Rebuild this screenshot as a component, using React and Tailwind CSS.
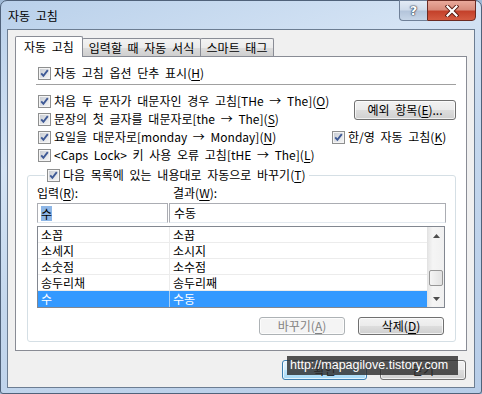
import React from "react";

function Check() {
  return (
    <svg width="13" height="13" viewBox="0 0 13 13" className="shrink-0">
      <defs>
        <linearGradient id="cbg" x1="0" y1="0" x2="1" y2="1">
          <stop offset="0" stopColor="#c9cdd4" />
          <stop offset="1" stopColor="#f4f4f4" />
        </linearGradient>
      </defs>
      <rect x="0.5" y="0.5" width="12" height="12" fill="#f4f4f4" stroke="#8e8f8f" />
      <rect x="2" y="2" width="9" height="9" fill="url(#cbg)" />
      <path d="M3.2 6.3 L5.4 8.8 L9.8 3.2" fill="none" stroke="#3f5a96" strokeWidth="1.9" />
    </svg>
  );
}

function CheckRow({ children, className = "" }) {
  return (
    <div className={`flex h-[18px] items-center ${className}`}>
      <Check />
      <span className="ml-[3px] whitespace-nowrap leading-[18px]">{children}</span>
    </div>
  );
}

function U({ children }) {
  return <span className="underline underline-offset-[2px]">{children}</span>;
}

function Btn({ children, className = "", disabled = false, isDefault = false }) {
  let look =
    "border-[#707070] bg-[linear-gradient(180deg,#f2f2f2_0%,#ebebeb_48%,#dddddd_52%,#cfcfcf_100%)] text-black";
  if (disabled) look = "border-[#adb2b5] bg-[#f4f4f4] text-[#838383]";
  if (isDefault)
    look =
      "border-[#3c7fb1] bg-[linear-gradient(180deg,#eaf6fd_0%,#d9f0fc_48%,#bee6fd_52%,#a7d9f5_100%)] text-black";
  return (
    <div
      className={`flex items-center justify-center rounded-[3px] border shadow-[inset_0_0_0_1px_rgba(255,255,255,0.7)] whitespace-nowrap ${look} ${className}`}
    >
      {children}
    </div>
  );
}

const rows = [
  ["소꼽", "소꿉"],
  ["소세지", "소시지"],
  ["소숫점", "소수점"],
  ["송두리채", "송두리째"],
];

export default function App() {
  return (
    <div className="w-[482px] h-[394px] overflow-hidden bg-[#9fb9d6] font-['Noto_Sans_CJK_KR',sans-serif] text-[12px] text-black [word-spacing:3px]">
      <div className="relative w-[482px] h-[394px] rounded-t-[7px] rounded-b-[3px] border border-[#50627a] bg-[linear-gradient(160deg,#b9d0ea_0%,#d4e3f4_30%,#c4d7ed_55%,#b7cde8_100%)] flex flex-col">
        {/* title bar */}
        <div className="h-[28px] shrink-0 flex items-start justify-between">
          <div className="pl-[7px] pt-[6px] leading-[18px]">자동 고침</div>
          <div className="flex mr-[5px] -mt-px">
            <div className="w-[28px] h-[21px] rounded-bl-[4px] border border-[#6f8098] border-r-0 bg-[linear-gradient(180deg,#e3ebf5_0%,#cfdbea_48%,#b3c4da_52%,#c7d6e8_100%)] flex items-center justify-center">
              <span className="font-['DejaVu_Sans',sans-serif] font-bold text-[13px] leading-none text-white [text-shadow:0_0_1px_#2b3a4f,0_0_1px_#2b3a4f,0_0_2px_#2b3a4f]">?</span>
            </div>
            <div className="w-[49px] h-[21px] rounded-br-[4px] border border-[#6b2a22] bg-[linear-gradient(180deg,#e9a99b_0%,#d88c7c_45%,#c4412b_55%,#d45b41_100%)] flex items-center justify-center">
              <svg width="14" height="12" viewBox="0 0 14 12">
                <path d="M2.5 1.5 L11.5 10.5 M11.5 1.5 L2.5 10.5" stroke="#5a1b12" strokeWidth="4" strokeLinecap="square" />
                <path d="M2.5 1.5 L11.5 10.5 M11.5 1.5 L2.5 10.5" stroke="#ffffff" strokeWidth="2.2" strokeLinecap="square" />
              </svg>
            </div>
          </div>
        </div>

        {/* client area */}
        <div className="mx-[6px] h-[359px] shrink-0 border border-[#6c7d92] bg-[#f0f0f0] flex flex-col pl-[7px] pr-[7px] pt-[6px]">
          {/* tabs */}
          <div className="flex h-[20px] items-end relative z-10">
            <div className="h-[21px] w-[68px] -mb-px bg-white border border-b-0 border-[#898c95] rounded-t-[2px] flex items-center justify-center pb-[1px]">
              자동 고침
            </div>
            <div className="h-[18px] w-[119px] -ml-px border border-b-0 border-[#898c95] rounded-t-[2px] bg-[linear-gradient(180deg,#f3f3f3_0%,#ebebeb_50%,#dddddd_51%,#cfcfcf_100%)] flex items-center justify-center">
              입력할 때 자동 서식
            </div>
            <div className="h-[18px] w-[74px] -ml-px border border-b-0 border-[#898c95] rounded-t-[2px] bg-[linear-gradient(180deg,#f3f3f3_0%,#ebebeb_50%,#dddddd_51%,#cfcfcf_100%)] flex items-center justify-center">
              스마트 태그
            </div>
          </div>

          {/* panel */}
          <div className="h-[295px] border border-[#898c95] bg-white flex flex-col pt-[7px]">
            <CheckRow className="ml-[22px]">
              자동 고침 옵션 단추 표시(<U>H</U>)
            </CheckRow>
            <div className="mt-[2px] ml-[20px] mr-[10px] h-[2px] border-t border-[#a0a0a0] border-b border-b-white" />
            <div className="mt-[6px] ml-[22px] flex">
              <div className="w-[294px] flex flex-col">
                <CheckRow>
                  처음 두 문자가 대문자인 경우 고침[THe → The](<U>O</U>)
                </CheckRow>
                <CheckRow>
                  문장의 첫 글자를 대문자로[the → The](<U>S</U>)
                </CheckRow>
                <CheckRow>
                  요일을 대문자로[monday → Monday](<U>N</U>)
                </CheckRow>
                <CheckRow>
                  &lt;Caps Lock&gt; 키 사용 오류 고침[tHE → The](<U>L</U>)
                </CheckRow>
              </div>
              <div className="flex flex-col">
                <Btn className="ml-[22px] mt-[8px] w-[102px] h-[20px]">
                  예외 항목(<U>E</U>)...
                </Btn>
                <CheckRow className="mt-[8px]">
                  한/영 자동 고침(<U>K</U>)
                </CheckRow>
              </div>
            </div>

            <fieldset className="mt-[2px] ml-[11px] mr-[10px] border border-[#d5dfe5] rounded-[3px] pl-[9px] pr-[9px] pb-[6px]">
              <legend className="ml-[8px] pl-[2px] pr-[4px]">
                <CheckRow>
                  다음 목록에 있는 내용대로 자동으로 바꾸기(<U>T</U>)
                </CheckRow>
              </legend>
              <div className="flex h-[18px] items-center">
                <div className="w-[136px]">
                  입력(<U>R</U>):
                </div>
                <div>
                  결과(<U>W</U>):
                </div>
              </div>
              <div className="mt-[1px] flex gap-[1px]">
                <div className="w-[131px] h-[20px] border border-[#abadb3] border-b-[#e3e9ef] bg-white flex items-center pl-[3px]">
                  <span className="bg-[#8db6e6] leading-[15px]">수</span>
                </div>
                <div className="w-[277px] h-[20px] border border-[#abadb3] border-b-[#e3e9ef] bg-white flex items-center pl-[4px]">
                  수동
                </div>
              </div>
              <div className="mt-[3px] w-[408px] h-[82px] border border-[#828790] bg-white flex">
                <div className="flex-1 flex flex-col">
                  {rows.map(([a, b]) => (
                    <div key={a} className="h-[16px] flex border-b border-[#ececec]">
                      <div className="w-[132px] border-r border-[#ececec] pl-[3px] leading-[15px]">{a}</div>
                      <div className="pl-[3px] leading-[15px]">{b}</div>
                    </div>
                  ))}
                  <div className="h-[16px] flex bg-[#3399ff] text-white">
                    <div className="w-[132px] border-r border-[#a9d0f5] pl-[3px] leading-[15px]">수</div>
                    <div className="pl-[3px] leading-[15px]">수동</div>
                  </div>
                </div>
                <div className="w-[17px] border-l border-[#e3e3e3] bg-[linear-gradient(90deg,#e6e6e6,#f5f5f5_30%,#f0f0f0)] flex flex-col">
                  <div className="h-[17px] flex items-center justify-center">
                    <svg width="7" height="4" viewBox="0 0 7 4">
                      <path d="M0 4 L3.5 0 L7 4 Z" fill="#4d4d4d" />
                    </svg>
                  </div>
                  <div className="flex-1">
                    <div className="mt-[26px] mx-px h-[16px] rounded-[2px] border border-[#979797] bg-[linear-gradient(90deg,#f4f4f4,#e2e2e2)]" />
                  </div>
                  <div className="h-[17px] flex items-center justify-center">
                    <svg width="7" height="4" viewBox="0 0 7 4">
                      <path d="M0 0 L3.5 4 L7 0 Z" fill="#4d4d4d" />
                    </svg>
                  </div>
                </div>
              </div>
              <div className="mt-[9px] mr-[2px] flex justify-end gap-[13px]">
                <Btn disabled className="w-[86px] h-[18px]">
                  바꾸기(<U>A</U>)
                </Btn>
                <Btn className="w-[86px] h-[18px]">
                  삭제(<U>D</U>)
                </Btn>
              </div>
            </fieldset>
          </div>

          {/* bottom buttons */}
          <div className="mt-[9px] mr-[1px] flex justify-end gap-[13px]">
            <Btn isDefault className="w-[85px] h-[20px]">
              확인
            </Btn>
            <Btn className="w-[86px] h-[20px]">닫기</Btn>
          </div>
        </div>

        {/* watermark overlay */}
        <div className="absolute left-[286px] top-[355px] w-[171px] h-[19px] bg-[rgba(45,45,45,0.82)] flex items-center pl-[3px] font-['Liberation_Sans',sans-serif] text-[12.5px] text-white [word-spacing:0px]">
          http://mapagilove.tistory.com
        </div>
      </div>
    </div>
  );
}
